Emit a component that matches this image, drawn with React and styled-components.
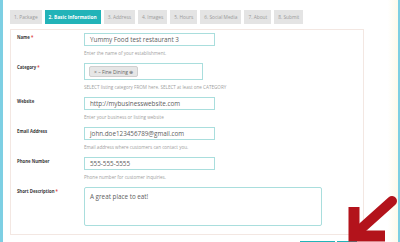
import React from 'react';
import styled, { createGlobalStyle } from 'styled-components';

const GlobalStyle = createGlobalStyle`
    html, body {
        margin: 0;
        padding: 0;
        background: #ffffff;
        overflow: hidden;
    }
    body {
        font-family: "Open Sans", "Liberation Sans", sans-serif;
    }
`;

const Page = styled.div`
    position: relative;
    display: flex;
    height: 242px;
    width: 400px;
    box-sizing: border-box;
    border-left: 3px solid #7dcfe3;
    border-right: 2px solid #7dcfe3;
    overflow: hidden;
`;

const Main = styled.div`
    width: 354px;
    padding: 10px 0 0 7px;
`;

const Cream = styled.div`
    flex: 1;
    background: linear-gradient(to right, #ffffff 0%, #ffffff 70%, #fdfaea 100%);
`;

const Tabs = styled.div`
    display: flex;
    gap: 3px;
    height: 14px;
    margin-bottom: 5px;
`;

const Tab = styled.div`
    display: flex;
    align-items: center;
    padding: 0 4px;
    background: ${p => (p.$active ? '#22b3b8' : '#e4e4e4')};
    color: ${p => (p.$active ? '#ffffff' : '#9a9a9a')};
    font-size: 4.8px;
    font-weight: ${p => (p.$active ? 700 : 400)};
    white-space: nowrap;
`;

const Card = styled.div`
    border: 1px solid #f3e7e2;
    height: 206px;
    box-sizing: border-box;
    padding: 3px 0 0 6px;
`;

const Row = styled.div`
    display: grid;
    grid-template-columns: 67px 1fr;
    margin-bottom: 8px;
`;

const Label = styled.div`
    padding-top: 2px;
    font-size: 4.3px;
    font-weight: 700;
    color: #3a3a3a;
    line-height: 5px;
    span { color: #e04848; }
`;

const Input = styled.div`
    width: ${p => p.$w || 131}px;
    height: ${p => p.$h || 13}px;
    box-sizing: border-box;
    border: 1px solid #a9dedd;
    padding: ${p => (p.$area ? '4px 5px' : '0 5px')};
    display: flex;
    align-items: ${p => (p.$area ? 'flex-start' : 'center')};
    font-size: 6.3px;
    color: #606060;
    border-radius: ${p => (p.$area ? '2px' : '0')};
    white-space: nowrap;
`;

const Chip = styled.div`
    height: 11px;
    box-sizing: border-box;
    margin-left: -1px;
    padding: 0 4px;
    display: flex;
    align-items: center;
    background: #e6e6e6;
    border: 1px solid #cfcfcf;
    border-radius: 2px;
    font-size: 5px;
    color: #666;
`;

const Help = styled.div`
    margin-top: 5px;
    font-size: 4.6px;
    line-height: 4px;
    color: #a0a0a0;
    white-space: nowrap;
`;

const Buttons = styled.div`
    display: flex;
    gap: 2px;
    margin: 6px 0 0 290px;
`;

const Button = styled.div`
    width: ${p => p.$w}px;
    height: 10px;
    background: #22b3b8;
`;

const Arrow = styled.svg`
    position: absolute;
    left: 337px;
    top: 195px;
`;

const tabs = ['1. Package', '2. Basic Information', '3. Address', '4. Images', '5. Hours', '6. Social Media', '7. About', '8. Submit'];

const Field = ({ label, req, help, children }) => (
    <Row>
        <Label>{label}{req && <span> *</span>}</Label>
        <div>
            {children}
            {help && <Help>{help}</Help>}
        </div>
    </Row>
);

const App = () => (
    <>
        <GlobalStyle />
        <Page>
            <Main>
                <Tabs>
                    {tabs.map((t, i) => <Tab key={t} $active={i === 1}>{t}</Tab>)}
                </Tabs>
                <Card>
                    <Field label="Name" req help="Enter the name of your establishment.">
                        <Input>Yummy Food test restaurant 3</Input>
                    </Field>
                    <Field label="Category" req help="SELECT listing category FROM here. SELECT at least one CATEGORY">
                        <Input $w={119} $h={17}>
                            <Chip>× – Fine Dining ⊕</Chip>
                        </Input>
                    </Field>
                    <Field label="Website" help="Enter your business or listing website">
                        <Input>http://mybusinesswebsite.com</Input>
                    </Field>
                    <Field label="Email Address" help="Email address where customers can contact you.">
                        <Input>john.doe123456789@gmail.com</Input>
                    </Field>
                    <Field label="Phone Number" help="Phone number for customer inquiries.">
                        <Input>555-555-5555</Input>
                    </Field>
                    <Field label="Short Description" req>
                        <Input $area $w={238} $h={39}>A great place to eat!</Input>
                    </Field>
                </Card>
                <Buttons>
                    <Button $w={35} />
                    <Button $w={20} />
                </Buttons>
            </Main>
            <Cream />
            <Arrow width="63" height="47" viewBox="0 0 63 47">
                <line x1="52" y1="6" x2="14" y2="40" stroke="#b3131b" strokeWidth="10" strokeLinecap="round" />
                <polyline points="14,12 14,41 45,41" fill="none" stroke="#b3131b" strokeWidth="11" strokeLinejoin="miter" />
            </Arrow>
        </Page>
    </>
);

export default App;
